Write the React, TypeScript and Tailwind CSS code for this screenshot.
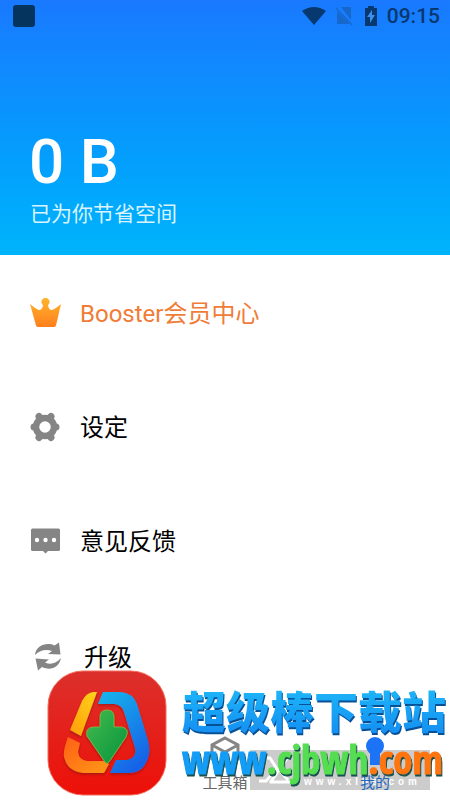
import type { ReactNode } from 'react';

interface MenuItem {
  label: string;
  icon: ReactNode;
  className: string;
}

function CrownIcon() {
  return (
    <svg viewBox="0 0 32 32" className="size-8">
      <defs>
        <linearGradient id="crown" x1="0" y1="0" x2="0" y2="1">
          <stop offset="0" stopColor="#ffb52e" />
          <stop offset="1" stopColor="#ff7f1c" />
        </linearGradient>
      </defs>
      <path
        d="M12.5 6.500A4 4 0 1 1 18.500 6.500L18 7.500Q19 12 22 12Q25 11 31 6L26 27.500Q25.500 29 24 29H8Q6.500 29 6 27.500L0 6Q6 11 9 12Q12 12 13 7.500Z"
        fill="url(#crown)"
      />
    </svg>
  );
}

function GearIcon() {
  return (
    <svg viewBox="0 0 32 32" className="size-8" stroke="#858585" strokeLinecap="round">
      <circle cx="15" cy="15" r="9" fill="none" strokeWidth="6.500" />
      <path d="M4 15H5M25 15H26M9 4.500L10 5.500M21 4.500L20 5.500M9 25.500L10 24.500M21 25.500L20 24.500" strokeWidth="7" />
    </svg>
  );
}

function FeedbackIcon() {
  return (
    <svg viewBox="0 0 32 32" className="size-8">
      <path d="M2.500 2.500H28.500Q30 2.500 30 4V23.500Q30 25 28.500 25H18L15.500 27.500L13 25H2.500Q1 25 1 23.500V4Q1 2.500 2.500 2.500Z" fill="#858585" />
      <g fill="#fff">
        <circle cx="7" cy="14" r="2.200" />
        <circle cx="15.500" cy="14" r="2.200" />
        <circle cx="24" cy="14" r="2.200" />
      </g>
    </svg>
  );
}

function UpgradeIcon() {
  return (
    <svg viewBox="0 0 32 32" className="size-8" fill="#858585">
      <path d="M1 13C2 3 13 0 20.500 3.500L25 0.500L26.500 12.500L14 12L18 9C12 7 6 8 1 13Z" />
      <path d="M27 16C25 26 16 29 8 25L4 28.500L1.500 16.500L15 17.500L11 20.500C17 23 22 21.500 27 16Z" />
    </svg>
  );
}

const items: MenuItem[] = [
  { label: 'Booster会员中心', icon: <CrownIcon />, className: 'px-[30px] text-[#f17c37]' },
  { label: '设定', icon: <GearIcon />, className: 'px-[30px] text-black' },
  { label: '意见反馈', icon: <FeedbackIcon />, className: 'px-[30px] text-black' },
  { label: '升级', icon: <UpgradeIcon />, className: 'px-[34px] pt-1 text-black' },
];

function StatusBar() {
  return (
    <div className="flex h-8 items-center justify-between pl-[13px] pr-[10px] text-[#07386f]">
      <span className="size-[22px] rounded-[3px] bg-[#05345f]" />
      <div className="flex items-center">
        <svg viewBox="0 0 24 20" className="h-5 w-6" fill="currentColor">
          <path d="M0 5Q12-3 24 5L12 19Z" />
        </svg>
        <svg viewBox="0 0 18 20" className="ml-[9px] h-5 w-[18px]">
          <path d="M6 1H16V14ZM2 5V18H15Z" fill="#1768cd" />
          <path d="M1 2L17 19" stroke="#1768cd" strokeWidth="1.500" />
        </svg>
        <svg viewBox="0 0 14 20" className="ml-[11px] h-5 w-[14px]">
          <path d="M1 2H4V0H10V2H13V20H1Z" fill="currentColor" />
          <path d="M8 4L3 11H6V17L11 9H8Z" fill="#3c8fee" />
        </svg>
        <span className="ml-[9px] text-[21px] leading-8 font-medium">09:15</span>
      </div>
    </div>
  );
}

function TabBar() {
  return (
    <nav className="relative grid h-[68px] grid-cols-3 text-[15px] leading-5">
      <button type="button" aria-label="首页" />
      <button type="button" className="flex flex-col items-center justify-between pt-1 pb-[7px] text-[#666]">
        <svg viewBox="0 0 32 32" className="size-8" fill="none" stroke="#858585" strokeWidth="3">
          <path d="M16 2L29 9V23L16 30L3 23V9ZM3 9L16 16L29 9M16 16V30" />
        </svg>
        工具箱
      </button>
      <button type="button" className="flex flex-col items-center justify-between pt-1 pb-[7px] text-[#2468bd]">
        <svg viewBox="0 0 32 32" className="size-8" fill="#1c73f6">
          <circle cx="16" cy="10" r="9" />
          <path d="M11 15H21V29H11Z" />
        </svg>
        我的
      </button>
    </nav>
  );
}

function AppLogo() {
  return (
    <svg viewBox="0 0 120 126" className="h-[126px] w-[120px] shrink-0">
      <defs>
        <linearGradient id="red" x1="0" y1="0" x2="0" y2="1">
          <stop offset="0" stopColor="#dc302c" />
          <stop offset="1" stopColor="#ed1008" />
        </linearGradient>
        <linearGradient id="blue" x1="0" y1="0" x2="0.600" y2="1">
          <stop offset="0" stopColor="#12b8ec" />
          <stop offset="1" stopColor="#1464e7" />
        </linearGradient>
        <linearGradient id="yellow" x1="1" y1="0" x2="0" y2="1">
          <stop offset="0" stopColor="#ffd31c" />
          <stop offset="1" stopColor="#ff9c09" />
        </linearGradient>
        <linearGradient id="orange" x1="0" y1="0" x2="1" y2="1">
          <stop offset="0" stopColor="#ff5f16" />
          <stop offset="1" stopColor="#ff9915" />
        </linearGradient>
        <linearGradient id="green" x1="0" y1="0" x2="1" y2="1">
          <stop offset="0" stopColor="#43ba4e" />
          <stop offset="1" stopColor="#07943c" />
        </linearGradient>
        <filter id="lift" x="-20%" y="-20%" width="140%" height="150%">
          <feDropShadow dx="0" dy="1.500" stdDeviation="1" floodColor="#7e160e" floodOpacity="0.600" />
        </filter>
      </defs>
      <rect x="1" y="1" width="118" height="124" rx="35" fill="url(#red)" stroke="#f36c5b" />
      <g filter="url(#lift)">
        <path d="M50 22H46Q39 23 35 31L23 60L34 66Z" fill="url(#yellow)" />
        <path d="M21 67L33 73L31 82Q32 90 40 91H56L62 94L57 103H36Q20 101 17 87Q16 80 21 67Z" fill="url(#orange)" />
        <path d="M56 22H74Q86 23 90 34L100 67Q106 84 97 96Q92 103 82 103H63L69 90H80Q90 88 88 78L77 42Q75 35 68 34H51Z" fill="url(#blue)" />
        <path d="M53 57V47Q53 40 60 40Q67 40 67 47V57H75Q83 59 79 67L62 92Q60 95 58 92L40 66Q38 58 46 57Z" fill="url(#green)" stroke="#7dcb4d" strokeWidth="0.700" />
      </g>
    </svg>
  );
}

// faded strip that lies behind the tab labels
function SiteStrip() {
  return (
    <div className="absolute right-5 bottom-[10px] flex h-10 w-[180px] items-center bg-[#ccc] text-white">
      <svg viewBox="0 0 40 36" className="ml-2 h-9 w-10 shrink-0" fill="none" stroke="white" strokeWidth="3">
        <path d="M3 6H12L19 17L8 29H1M12 31L30 5M23 20L30 28M12 30H36" />
      </svg>
      <span className="absolute right-[9px] bottom-0 font-['Liberation_Sans'] text-[10px] leading-4 font-bold tracking-[4px]">
        www.xlhs.com
      </span>
    </div>
  );
}

function Banner() {
  return (
    <div className="pointer-events-none absolute inset-x-0 bottom-1 flex items-start gap-[15px] pl-[47px]">
      <AppLogo />
      <div className="pt-[14px] whitespace-nowrap">
        <p className="bg-linear-to-b from-[#20b9f8] to-[#1686f1] bg-clip-text text-[44px] leading-[60px] font-black text-transparent drop-shadow-[1px_2px_0px_#075095]">
          超级棒下载站
        </p>
        <p className="font-['Open_Sans_Condensed','Liberation_Sans_Narrow',sans-serif] text-[39px] leading-[30px] font-bold drop-shadow-[1px_2px_0px_#174f50] [-webkit-text-stroke-width:1px]">
          <span className="text-[#139df6]">www</span>
          <span className="text-[#55de51]">.cjbwh</span>
          <span className="text-[#ff7510]">.com</span>
        </p>
      </div>
    </div>
  );
}

export default function App() {
  return (
    <div className="relative flex min-h-screen flex-col overflow-hidden bg-white font-[Roboto,'Noto_Sans_CJK_SC',sans-serif]">
      <header className="flex flex-col bg-linear-to-b from-[#1979ff] to-[#00b4fb] pb-[27px] text-white">
        <StatusBar />
        <h1 className="mt-24 px-[29px] text-[62px] leading-[68px] font-medium">0 B</h1>
        <p className="mt-1 px-[30px] text-[21px] leading-7 text-[#d9f4ff]">已为你节省空间</p>
      </header>
      <main className="flex-1 pt-[2px]">
        {items.map((item) => (
          <button
            key={item.label}
            type="button"
            className={`flex h-[114px] w-full items-center gap-[18px] text-left text-[24px] leading-8 ${item.className}`}
          >
            {item.icon}
            <span>{item.label}</span>
          </button>
        ))}
      </main>
      <SiteStrip />
      <TabBar />
      <Banner />
    </div>
  );
}
